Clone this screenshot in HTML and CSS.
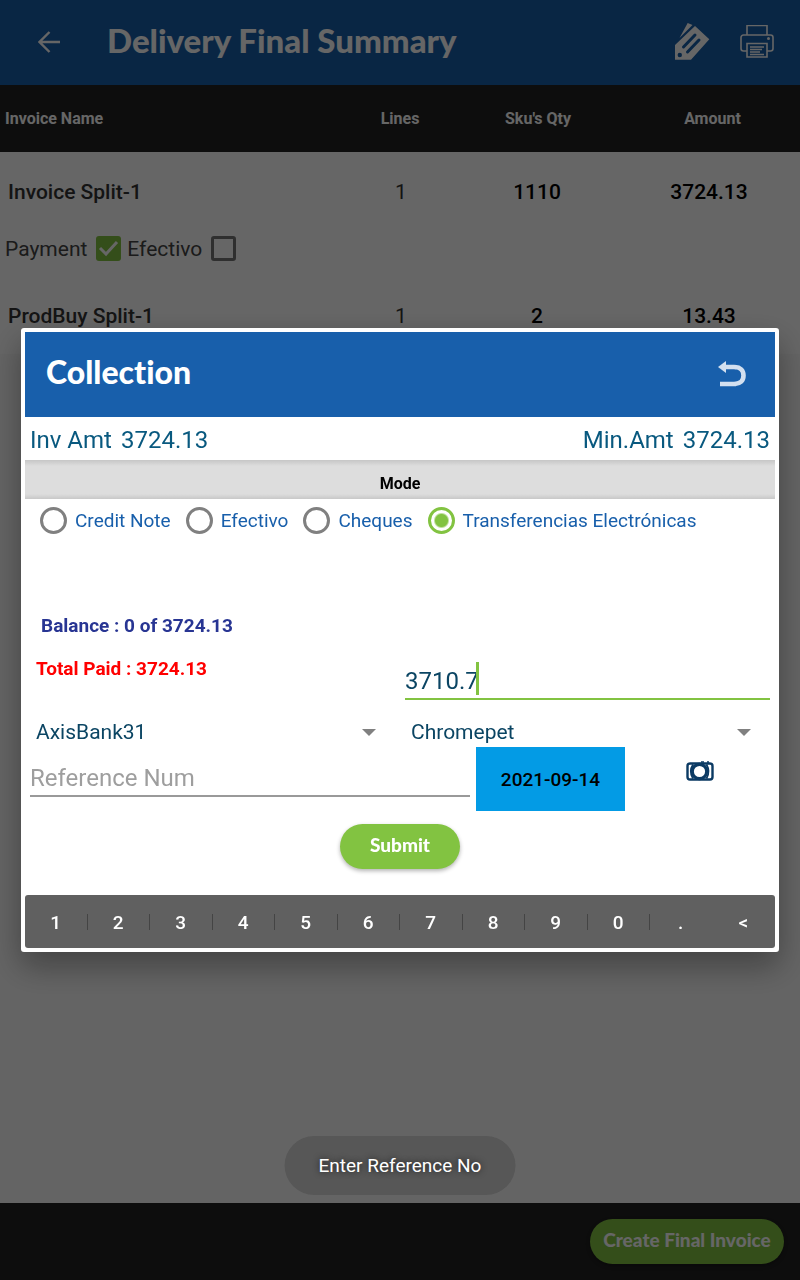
FILE: index.html
```html
<!DOCTYPE html>
<html lang="en">
<head>
<meta charset="utf-8">
<meta name="viewport" content="width=device-width, initial-scale=1">
<title>Delivery Final Summary</title>
<link rel="stylesheet" href="styles.css">
</head>
<body>
<div class="page">
  <header class="app-bar">
    <button class="icon-button back" type="button" aria-label="Back">
      <svg width="22" height="22" viewBox="0 0 22 22" fill="none" stroke="currentColor" stroke-width="2.400"><path d="M22 11H2M11.500 1 1.500 11l10 10"/></svg>
    </button>
    <h1 class="app-title">Delivery Final Summary</h1>
    <button class="icon-button" type="button" aria-label="Price tags">
      <svg width="36" height="38" viewBox="0 0 36 38"><path fill="currentColor" d="M13.700 0 18.500 2 5.500 15z"/><path fill="currentColor" fill-rule="evenodd" d="M21 3 35.300 16.300 17 36.700H1V22zM5.800 29.800a2.200 2.200 0 1 0 0 4.400 2.200 2.200 0 0 0 0-4.400z"/><path d="M9.500 24 21 12M13.500 29 25 17" stroke="#185fab" stroke-width="3" stroke-linecap="round"/></svg>
    </button>
    <button class="icon-button" type="button" aria-label="Print">
      <svg width="34" height="34" viewBox="0 1 34 34" fill="none" stroke="currentColor" stroke-width="1.600"><path d="M7 11V1.500h20V11M7 27H3.500A2.500 2.500 0 0 1 1 24.500V13.500A2.500 2.500 0 0 1 3.500 11h27a2.500 2.500 0 0 1 2.500 2.500v11a2.500 2.500 0 0 1-2.500 2.500H27M7 19.500h20V33H7zM10 23h14M10 25.500h12M10 28h10M10 30.500h14"/><circle cx="28.500" cy="14.500" r=".7"/></svg>
    </button>
  </header>

  <table class="invoices">
    <thead>
      <tr><th class="col-name">Invoice Name</th><th class="col-lines">Lines</th><th class="col-qty">Sku's Qty</th><th class="col-amount">Amount</th></tr>
    </thead>
    <tbody>
      <tr class="invoice"><td class="name">Invoice Split-1</td><td class="lines">1</td><td>1110</td><td>3724.13</td></tr>
      <tr class="payment">
        <td colspan="4">
          <div class="checks">
            <label class="check">Payment <input type="checkbox" checked></label>
            <label class="check">Efectivo <input type="checkbox"></label>
          </div>
        </td>
      </tr>
      <tr class="invoice"><td class="name">ProdBuy Split-1</td><td class="lines">1</td><td>2</td><td>13.43</td></tr>
    </tbody>
  </table>

  <footer class="bottom-bar">
    <button class="pill create" type="button">Create Final Invoice</button>
  </footer>
</div>

<div class="scrim">
  <section class="dialog" role="dialog" aria-modal="true" aria-labelledby="dialog-title">
    <header class="dialog-bar">
      <h2 class="dialog-title" id="dialog-title">Collection</h2>
      <button class="icon-button undo" type="button" aria-label="Return">
        <svg width="30" height="28" viewBox="0 0 30 28"><path fill="currentColor" d="m1 6 8-6v12z"/><path d="M7 6h10c6.500 0 9.500 3.500 9.500 8.500S23.500 23 17 23H3" fill="none" stroke="currentColor" stroke-width="4.600"/></svg>
      </button>
    </header>

    <div class="amounts">
      <p class="amount"><span>Inv Amt</span><span>3724.13</span></p>
      <p class="amount"><span>Min.Amt</span><span>3724.13</span></p>
    </div>

    <h3 class="mode-title">Mode</h3>
    <div class="modes" role="radiogroup" aria-label="Mode">
      <label class="mode"><input type="radio" name="mode">Credit Note</label>
      <label class="mode"><input type="radio" name="mode">Efectivo</label>
      <label class="mode"><input type="radio" name="mode">Cheques</label>
      <label class="mode"><input type="radio" name="mode" checked>Transferencias Electrónicas</label>
    </div>

    <div class="totals">
      <div class="summary">
        <p class="balance">Balance : 0 of 3724.13</p>
        <p class="paid">Total Paid : 3724.13</p>
      </div>
      <div class="paid-field">
        <input class="field active" type="text" inputmode="decimal" value="3710.7" aria-label="Amount paid">
        <span class="caret"></span>
      </div>
    </div>

    <div class="pickers">
      <div class="picker">
        <select aria-label="Bank"><option>AxisBank31</option></select>
        <svg class="arrow" width="14" height="7" viewBox="0 0 14 7"><path d="M0 0h14L7 7z" fill="#808080"/></svg>
      </div>
      <div class="picker">
        <select aria-label="Branch"><option>Chromepet</option></select>
        <svg class="arrow" width="14" height="7" viewBox="0 0 14 7"><path d="M0 0h14L7 7z" fill="#808080"/></svg>
      </div>
    </div>

    <div class="reference">
      <input class="field" type="text" placeholder="Reference Num" aria-label="Reference Num">
      <button class="date" type="button">2021-09-14</button>
      <button class="icon-button camera" type="button" aria-label="Take photo">
        <svg width="28" height="20" viewBox="0 0 28 20" fill="none" stroke="currentColor"><rect x="1.500" y="2.500" width="25" height="16" rx="2.500" stroke-width="2.400"/><circle cx="13.500" cy="10.500" r="7.200" fill="#fff" stroke-width="3.200"/><path d="M7 3.500Q2.500 10.500 7 17.500M20.500 3.500q4 7 0 14" stroke-width="1.800"/><path d="M15 1h3M21 1h2" stroke-width="1.500"/></svg>
      </button>
    </div>

    <div class="actions"><button class="pill submit" type="button">Submit</button></div>

    <div class="keypad">
      <button type="button">1</button><button type="button">2</button><button type="button">3</button><button type="button">4</button><button type="button">5</button><button type="button">6</button><button type="button">7</button><button type="button">8</button><button type="button">9</button><button type="button">0</button><button type="button">.</button><button type="button" aria-label="Delete">&lt;</button>
    </div>
  </section>
  <div class="toast" role="status">Enter Reference No</div>
</div>
</body>
</html>
```
FILE: styles.css
```css
* { box-sizing: border-box; }

body {
  margin: 0;
  font-family: Roboto, "Liberation Sans", sans-serif;
  color: #000;
}

h1, h2, h3, p { margin: 0; }

button, input, select { font: inherit; color: inherit; }

button { border: 0; padding: 0; background: none; cursor: pointer; }

.icon-button { display: flex; color: #fff; }

.page {
  display: flex;
  flex-direction: column;
  min-height: 100vh;
  background: #fafafa;
}

.app-bar {
  display: flex;
  align-items: center;
  gap: 30px;
  height: 85px;
  padding: 0 26px 1px 38px;
  background: #185fab;
  color: #fff;
}

.app-title {
  flex: 1;
  padding: 0 0 5px 17px;
  font: 900 33px/40px Lato, sans-serif;
}

.invoices {
  width: 100%;
  table-layout: fixed;
  border-collapse: collapse;
  background: #fff;
  text-align: center;
}

.invoices th {
  height: 67px;
  padding: 0;
  background: #212121;
  color: #fff;
  font-size: 16px;
  font-weight: 700;
}

.invoices .col-name { width: 43%; padding-left: 5px; text-align: left; }
.col-lines { width: 14%; }
.invoices .col-qty { width: 20%; padding-left: 4px; }
.invoices .col-amount { width: 23%; padding-left: 9px; }

.invoices td { padding: 0; }

.invoice td {
  height: 78px;
  padding: 2px 0 0 2px;
  font-size: 21px;
  font-weight: 500;
}

.invoice .name { padding-left: 8px; text-align: left; color: #333; }
.invoice .lines { font-weight: 400; color: #333; }

.payment td { height: 46px; padding: 0 0 9px 5px; }

.checks { display: flex; gap: 6px; }

.check {
  display: flex;
  align-items: center;
  gap: 9px;
  font-size: 21px;
  line-height: 26px;
  color: #444;
}

.check input {
  appearance: none;
  width: 25px;
  height: 25px;
  margin: 0;
  border: 3px solid #757575;
  border-radius: 3px;
}

.check input:checked {
  border: 0;
  background: #82c341 url("data:image/svg+xml,%3Csvg xmlns='http://www.w3.org/2000/svg' viewBox='0 0 25 25'%3E%3Cpath d='m4 12 6 6L21 6' fill='none' stroke='white' stroke-width='3'/%3E%3C/svg%3E");
}

.bottom-bar {
  display: flex;
  justify-content: flex-end;
  margin-top: auto;
  padding: 16px;
  background: #212121;
}

.pill {
  height: 45px;
  padding: 0 12px 3px;
  border-radius: 23px;
  background: #82c341;
  color: #fff;
  font: 900 19px/24px Lato, sans-serif;
  box-shadow: 0 2px 4px rgba(0, 0, 0, .3);
}

.create { min-width: 194px; }
.submit { min-width: 120px; }

.scrim {
  position: fixed;
  inset: 0;
  display: flex;
  align-items: center;
  padding: 21px;
  background: rgba(0, 0, 0, .6);
}

.dialog {
  flex: 1;
  border: 4px solid #fff;
  border-radius: 3px;
  background: #fff;
  box-shadow: 0 14px 32px rgba(0, 0, 0, .35);
}

.dialog-bar {
  display: flex;
  align-items: center;
  justify-content: space-between;
  height: 85px;
  padding: 0 28px 0 21px;
  background: #185fab;
  color: #fff;
}

.dialog-title {
  padding-bottom: 5px;
  font: 900 32px/40px Lato, sans-serif;
  font-variant-ligatures: none;
}

.undo { color: #d3e0f0; }

.amounts {
  display: flex;
  justify-content: space-between;
  padding: 9px 5px 6px;
  font-size: 24px;
  line-height: 28px;
  color: #09597f;
}

.amount { display: flex; gap: 9px; }

.mode-title {
  height: 39px;
  padding-top: 8px;
  background: linear-gradient(#c6c6c6, #ddd 6px, #ddd 34px, #c8c8c8);
  font-size: 16px;
  font-weight: 700;
  line-height: 31px;
  text-align: center;
}

.modes {
  display: flex;
  flex-wrap: wrap;
  gap: 15px;
  padding: 8px 15px;
}

.mode {
  display: flex;
  align-items: center;
  gap: 8px;
  font-size: 19px;
  line-height: 27px;
  color: #185fab;
}

.mode input {
  appearance: none;
  width: 27px;
  height: 27px;
  margin: 0;
  border: 3px solid #808080;
  border-radius: 50%;
}

.mode input:checked {
  border-color: #82c341;
  background: radial-gradient(circle, #82c341 6px, #fff 8px);
}

.totals {
  display: grid;
  grid-template-columns: 1fr 1fr;
  align-items: end;
  padding-top: 72px;
}

.summary {
  display: grid;
  gap: 19px;
  padding: 0 11px 36px;
  font-size: 19px;
  font-weight: 700;
  line-height: 24px;
}

.balance { padding-left: 5px; color: #283593; }
.paid { color: #f00; }

.paid-field { position: relative; padding: 0 5px 17px; }

.field {
  width: 100%;
  height: 40px;
  padding: 3px 0 0;
  border: 0;
  border-bottom: 2px solid #999;
  border-radius: 0;
  outline: 0;
  background: none;
  font-size: 24px;
  color: #0b4563;
}

.field::placeholder { color: #9e9e9e; opacity: 1; }

.field.active { border-color: #82c341; }

.caret {
  position: absolute;
  top: 2px;
  left: 76px;
  width: 3px;
  height: 33px;
  background: #82c341;
}

.pickers { display: grid; grid-template-columns: 1fr 1fr; }

.picker {
  display: flex;
  align-items: center;
  padding: 0 24px 0 11px;
}

.picker select {
  appearance: none;
  flex: 1;
  height: 30px;
  padding: 0;
  border: 0;
  background: none;
  font-size: 21px;
  color: #0b4563;
}

.reference {
  display: grid;
  grid-template-columns: 440fr 149fr 144fr;
  column-gap: 6px;
  padding-left: 5px;
}

.reference .field { margin-top: 10px; }

.date {
  height: 64px;
  background: #039be5;
  color: #000;
  font-size: 19px;
  font-weight: 500;
}

.camera { justify-content: center; padding: 14px 6px 0 0; color: #0b3a63; }

.actions {
  display: flex;
  justify-content: center;
  padding: 13px 0 26px;
}

.keypad {
  display: flex;
  border-radius: 3px;
  background: #606060;
  color: #fff;
}

.keypad button {
  display: flex;
  flex: 1;
  align-items: center;
  justify-content: center;
  height: 53px;
  padding: 2px 1px 0 0;
  font-size: 19px;
  font-weight: 500;
  background: linear-gradient(#444, #444) right center / 1px 16px no-repeat;
}

.keypad button:nth-last-child(-n + 2) { background: none; }

.toast {
  position: absolute;
  bottom: 85px;
  left: 50%;
  transform: translateX(-50%);
  padding: 16px 34px;
  border-radius: 30px;
  background: #575757;
  color: #fff;
  font-size: 19px;
  line-height: 27px;
  white-space: nowrap;
  text-shadow: 0 0 6px rgba(0, 0, 0, .7);
}
```
